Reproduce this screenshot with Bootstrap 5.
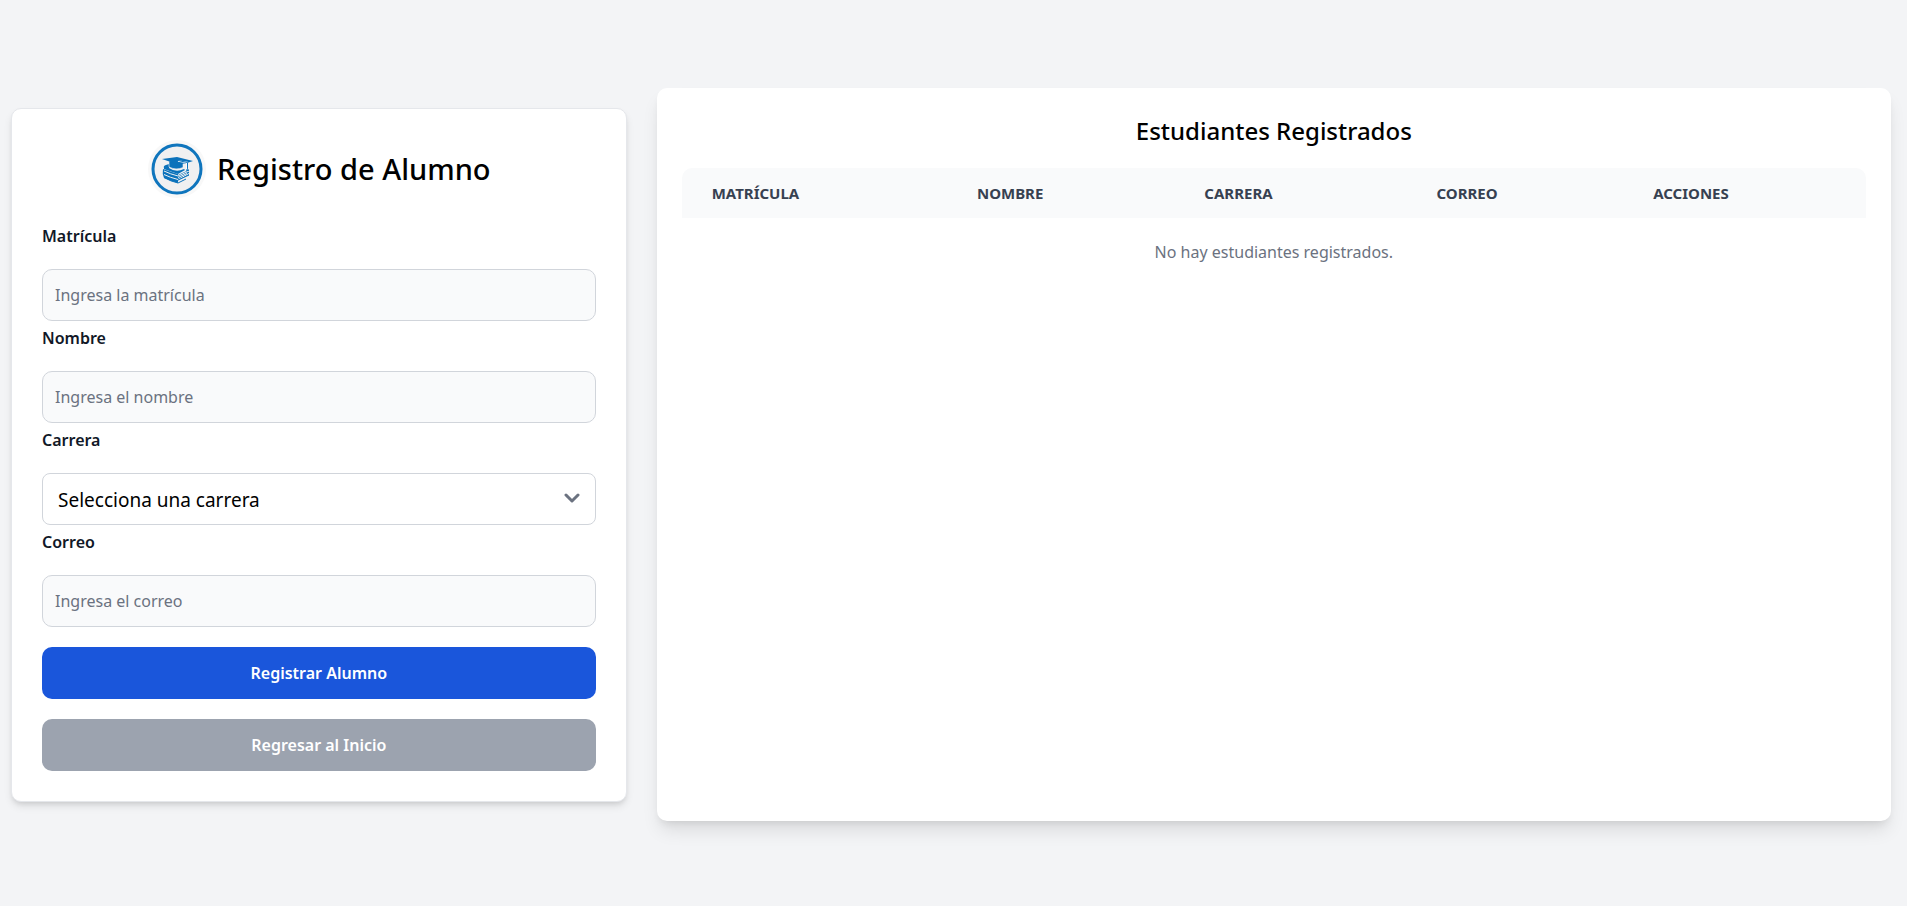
<!DOCTYPE html>
<html lang="es">
<head>
<meta charset="utf-8">
<meta name="viewport" content="width=device-width, initial-scale=1">
<title>Registro de Alumno</title>
<link href="https://cdn.jsdelivr.net/npm/bootstrap@5.3.0/dist/css/bootstrap.min.css" rel="stylesheet">
<style>
  body { background: #f3f4f6; color: #000; font-family: "Noto Sans", "Open Sans", sans-serif; font-size: 16px; line-height: 25px; }
  .page { padding: 88px 0 85px; }
  .form-side { padding-left: 11px; padding-right: 9px; }
  .list-side { padding-left: 21px; padding-right: 16px; }
  .form-card { padding: 30px; border: 1px solid #e5e7eb; border-radius: 10px; box-shadow: 0 5px 8px -1px rgba(0,0,0,.1), 0 3px 5px -2px rgba(0,0,0,.1); }
  .list-card { padding: 25px; border-radius: 10px; box-shadow: 0 12px 18px -3px rgba(0,0,0,.1), 0 5px 8px -4px rgba(0,0,0,.1); }
  .brand { gap: 10px; margin-bottom: 25px; }
  .brand h1 { font-size: 29px; line-height: 40px; font-weight: 500; }
  .list-card h2 { font-size: 24px; line-height: 35px; font-weight: 500; margin-bottom: 20px; }
  .form-label { color: #111827; font-weight: 600; margin: 5px 0 20px; display: block; }
  .form-control, .form-select { height: 52px; border: 1px solid #d1d5db; border-radius: 10px; color: #111827; }
  .form-control { background: #f9fafb; padding: 12px; font-size: 16px; }
  .form-control::placeholder { color: #6b7280; }
  .form-select { padding: 12px 40px 12px 15px; font-size: 19px; border-radius: 8px; color: #000;
    background-image: url("data:image/svg+xml,%3Csvg xmlns='http://www.w3.org/2000/svg' viewBox='0 0 16 16'%3E%3Cpath d='M2 4l6 6 6-6' fill='none' stroke='%236b7280' stroke-width='3' stroke-linecap='round' stroke-linejoin='round'/%3E%3C/svg%3E");
    background-position: right 15px center; background-size: 16px; }
  .btn-action { height: 52px; margin-top: 20px; border: 0; border-radius: 10px; color: #fff; font-size: 16px; font-weight: 600; }
  .btn-register { background: #1a56db; }
  .btn-back { background: #9ca3af; }
  .btn-register:hover { background: #1e429f; color: #fff; }
  .btn-back:hover { background: #6b7280; color: #fff; }
  .students th { background: #f9fafb; color: #374151; font-size: 15px; line-height: 20px; font-weight: 700; padding: 15px 30px; text-transform: uppercase; }
  .students th:first-child { border-top-left-radius: 10px; }
  .students th:last-child { border-top-right-radius: 10px; }
  .students td { color: #6b7280; padding: 22px 30px; }
  .c-id { width: 22.4%; } .c-name { width: 19.2%; } .c-career { width: 19.6%; } .c-mail { width: 18.3%; }
</style>
</head>
<body>
<main class="page min-vh-100 d-flex">
  <div class="row g-0 w-100 align-items-center">
    <section class="col-4 form-side">
      <div class="form-card bg-white">
        <div class="brand d-flex align-items-center justify-content-center">
          <svg width="60" height="60" viewBox="0 0 60 60" aria-hidden="true">
            <circle cx="30" cy="30" r="29" fill="#f8f8f8"/>
            <circle cx="30" cy="30" r="24" fill="#f0f0f1" stroke="#0f75bd" stroke-width="3"/>
            <g fill="#0b72bb">
              <path d="M17 29q-1-2 2-3l3-1v4q7 5 15 1l1 1-7 4-14-5z"/>
              <path d="M16 30l15 5v9q-7-2-14-5-2-4-1-9z"/>
              <path d="M31 36l11-5v5l-11 6z"/>
            </g>
            <g fill="none" stroke="#f0f0f1" stroke-width="1">
              <path d="M17 32q6 3 14 5l11-5M17 35.500q6 3 14 5l11-6"/>
              <path d="M31 38.500l9-4M31 42l10-5"/>
            </g>
            <g fill="none" stroke="#0b72bb" stroke-width="1">
              <path d="M17 38.500q7 4 14 5.500l8-4M31 41l11-5"/>
            </g>
            <path d="M22 22q8-2 14 1v5.500q-7 3-14-.5z" fill="#0b72bb" stroke="#f0f0f1" stroke-width=".6"/>
            <path d="M15 20l15-2 16 4-6 2-9 1.500z" fill="#0b72bb"/>
            <path d="M31 22l9 1.500v7" fill="none" stroke="#fff" stroke-width="1.600"/>
            <path d="M31 21.500l9.500 2v6l-1 2h2l-1-2" fill="none" stroke="#0b72bb" stroke-width="1"/>
          </svg>
          <h1 class="mb-0">Registro de Alumno</h1>
        </div>
        <form>
          <label class="form-label" for="matricula">Matrícula</label>
          <input class="form-control" id="matricula" type="text" placeholder="Ingresa la matrícula">
          <label class="form-label" for="nombre">Nombre</label>
          <input class="form-control" id="nombre" type="text" placeholder="Ingresa el nombre">
          <label class="form-label" for="carrera">Carrera</label>
          <select class="form-select" id="carrera"><option>Selecciona una carrera</option></select>
          <label class="form-label" for="correo">Correo</label>
          <input class="form-control" id="correo" type="email" placeholder="Ingresa el correo">
          <button class="btn btn-action btn-register w-100" type="submit">Registrar Alumno</button>
          <button class="btn btn-action btn-back w-100" type="button">Regresar al Inicio</button>
        </form>
      </div>
    </section>
    <section class="col-8 list-side align-self-stretch">
      <div class="list-card bg-white h-100">
        <h2 class="text-center">Estudiantes Registrados</h2>
        <table class="table table-borderless students mb-0">
          <thead>
            <tr>
              <th class="c-id" scope="col">Matrícula</th>
              <th class="c-name" scope="col">Nombre</th>
              <th class="c-career" scope="col">Carrera</th>
              <th class="c-mail" scope="col">Correo</th>
              <th scope="col">Acciones</th>
            </tr>
          </thead>
          <tbody>
            <tr><td colspan="5" class="text-center">No hay estudiantes registrados.</td></tr>
          </tbody>
        </table>
      </div>
    </section>
  </div>
</main>
<script src="https://cdn.jsdelivr.net/npm/bootstrap@5.3.0/dist/js/bootstrap.bundle.min.js"></script>
</body>
</html>
